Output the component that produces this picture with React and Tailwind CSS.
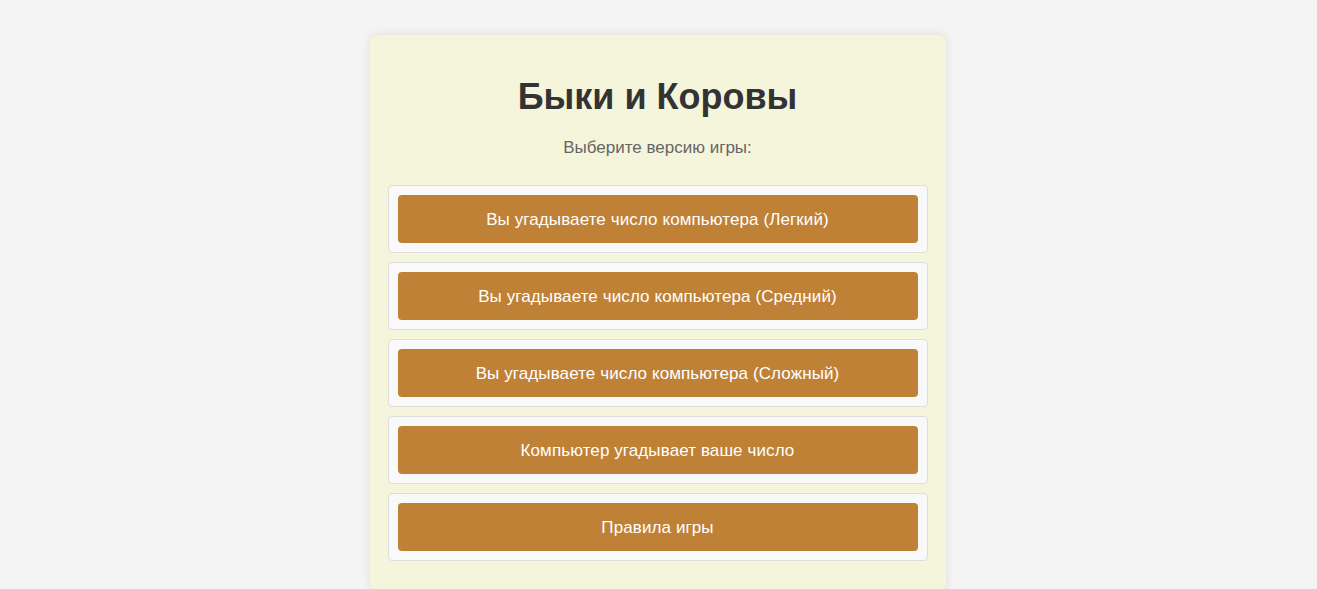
const modes = [
  'Вы угадываете число компьютера (Легкий)',
  'Вы угадываете число компьютера (Средний)',
  'Вы угадываете число компьютера (Сложный)',
  'Компьютер угадывает ваше число',
  'Правила игры',
];

export default function App() {
  return (
    <div className="min-h-screen bg-[#f4f4f4] pt-[35px] font-['Liberation_Sans',Arial,sans-serif]">
      <div className="mx-auto w-[576px] -translate-x-px rounded-lg bg-[#f5f5dc] px-[18px] pt-[41px] pb-[30px] shadow-[0_0_10px_rgba(0,0,0,0.1)]">
        <h1 className="text-center text-[36px] font-bold leading-[41px] text-[#333]">Быки и Коровы</h1>
        <p className="mt-[22px] text-center text-[17px] leading-[18px] text-[#666]">Выберите версию игры:</p>
        <div className="mt-[28px] flex flex-col gap-[9px]">
          {modes.map((m) => (
            <div key={m} className="rounded border border-[#ddd] bg-[#f9f9f9] p-[9px]">
              <button className="h-12 w-full rounded bg-[#bf8136] pt-px text-[17px] tracking-[0.1px] text-white">{m}</button>
            </div>
          ))}
        </div>
      </div>
    </div>
  );
}
